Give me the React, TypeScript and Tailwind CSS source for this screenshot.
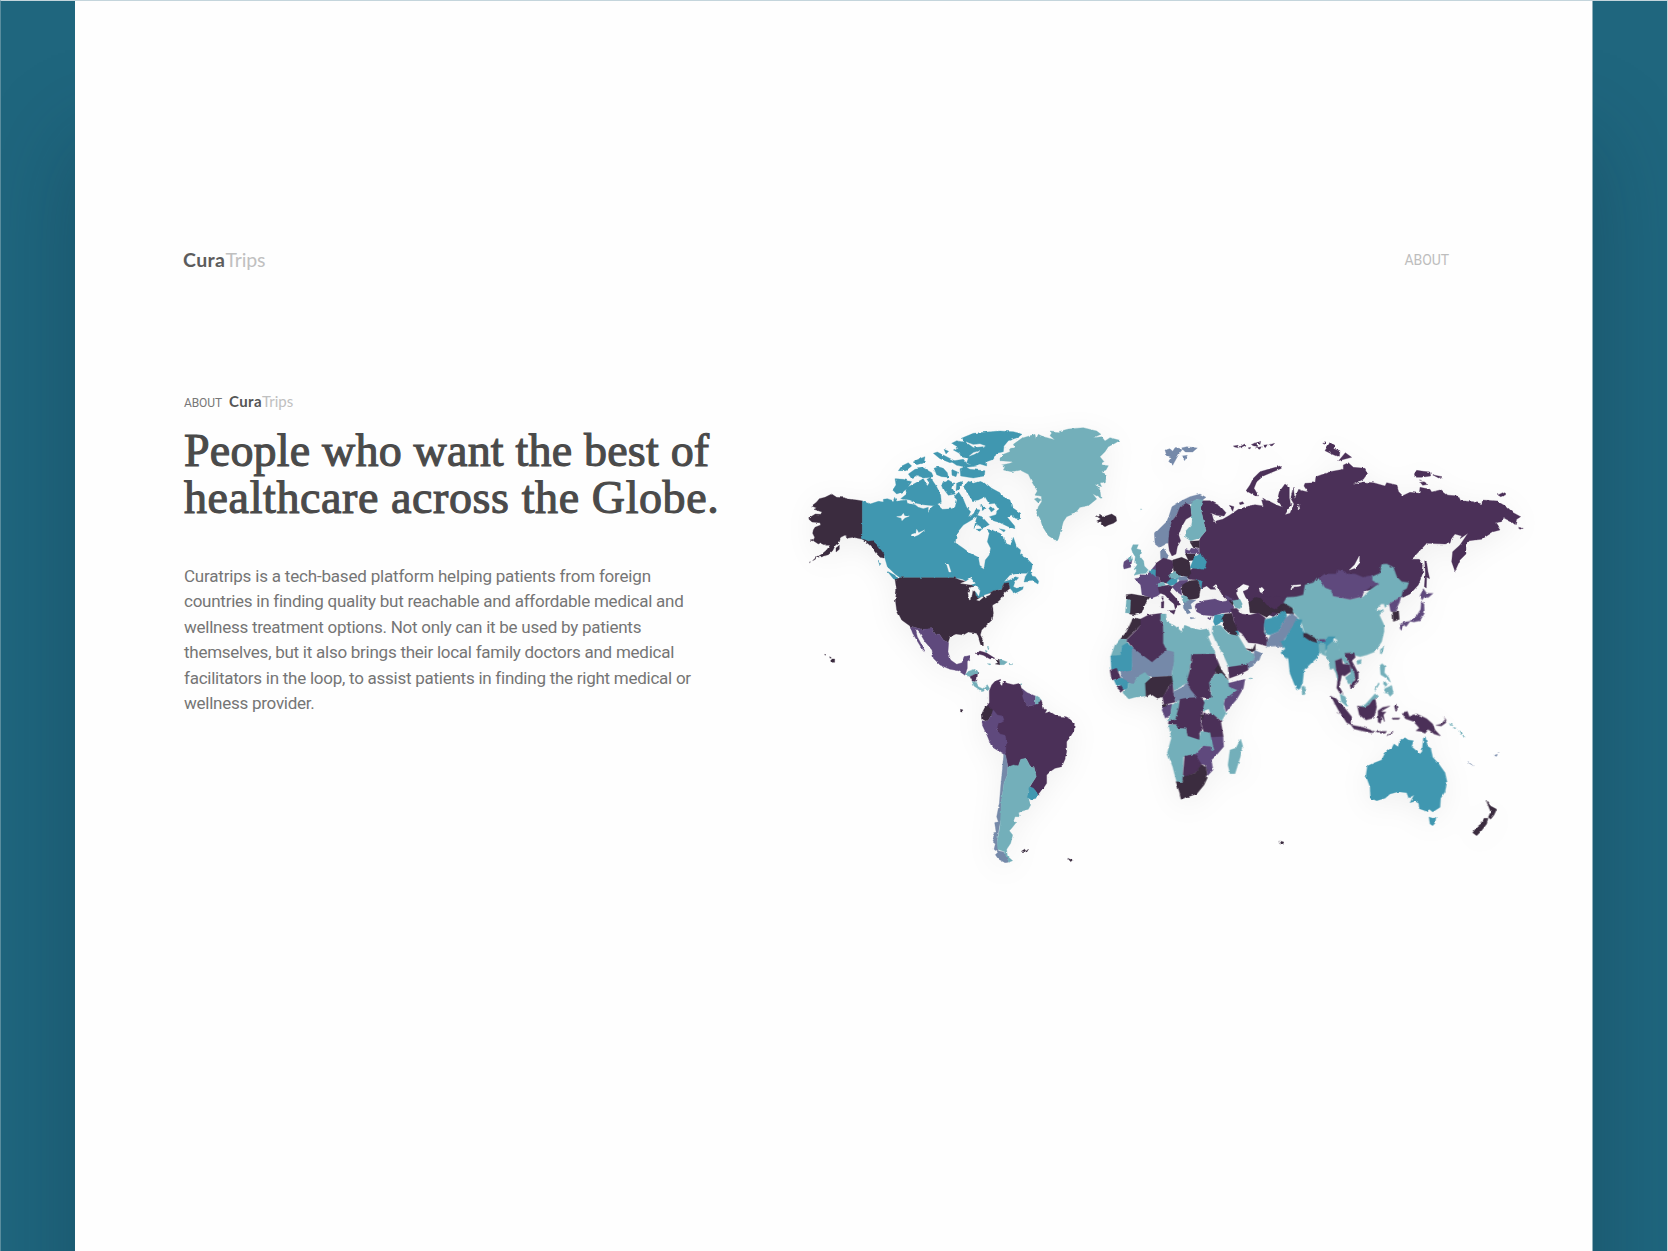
import React from 'react';

const D = '#3b2c3f';
const P = '#4b3058';
const V = '#5f497d';
const S = '#7589a9';
const T = '#4097b0';
const L = '#73afba';
const W = '#f6f6f6';

type Region = { x: number; y: number; shapes: [string, string][] };

const regions: Region[] = [
  {
    // North America
    x: 800,
    y: 420,
    shapes: [
      [D, 'M188 243L170 240 150 238 130 233 110 232 95 222 75 232 58 236 50 246 35 258 50 264 42 268 66 276 62 283 46 282 30 292 26 297 36 306 60 308 62 315 45 322 40 330 38 340 44 352 40 362 55 372 62 368 78 376 90 376 80 390 65 403 50 412 60 411 85 404 98 392 106 376 118 366 122 352 134 346 145 354 160 352 188 358Z'],
      [D, 'M108 384L118 376 118 388 108 396Z M50 410L38 422 46 418Z M28 428L34 425 32 430Z M30 360L40 358 38 363Z'],
      [T, 'M187 243L210 252 235 244 250 246 250 238 262 236 280 242 284 232 290 244 320 240 322 250 345 254 355 262 370 266 385 262 384 275 395 262 410 250 430 268 455 266 465 262 470 244 475 225 490 238 500 262 512 275 505 290 520 282 528 268 540 270 530 290 515 300 490 315 470 340 466 368 490 385 510 400 535 412 540 440 552 448 556 420 568 405 572 385 562 365 568 340 560 328 575 330 600 340 612 350 615 370 632 376 640 352 650 380 662 390 660 402 680 415 697 432 695 448 680 460 655 460 630 465 612 485 630 480 645 470 656 473 645 485 640 500 650 505 670 500 668 508 655 515 640 522 638 514 630 505 625 488 612 490 605 508 580 512 560 525 540 535 528 530 522 500 500 485 488 478 463 473 300 473 285 462 262 440 252 405 230 378 205 364 187 358Z'],
      [T, 'M690 448L676 470 672 486 700 484 714 492 716 484 706 470 696 468Z M262 454L285 466 297 484 280 476Z M234 420L242 430 240 438Z'],
      [T, 'M455 70L470 62 490 66 484 55 520 40 560 36 600 33 640 35 667 42 655 52 625 62 612 78 610 95 590 100 580 118 560 125 560 138 540 132 520 138 500 128 505 115 485 112 478 100 460 90 475 82Z'],
      [W, 'M498 66L520 74 540 72 556 78 540 80 520 82Z M508 108L520 98 540 92 524 102Z'],
      [T, 'M480 146L495 140 510 148 555 152 553 168 520 174 482 168Z M452 124L490 118 502 132 530 138 500 142 470 136Z M400 100L412 96 440 110 466 124 450 128 420 116Z M432 88L446 94 438 102Z M356 118L362 112 366 122Z'],
      [T, 'M325 162L345 148 370 143 395 158 400 170 372 174 350 166 335 176Z M295 152L305 138 325 128 335 138 318 152Z M340 124L375 110 372 128 350 134Z M402 145L415 140 430 145 442 158 445 172 425 170 410 164Z M455 148L473 156 468 170 456 166Z M380 176L392 172 398 180 386 186Z'],
      [T, 'M285 176L310 178 335 185 325 200 310 215 290 222 278 210 288 195Z'],
      [T, 'M302 236L320 222 316 205 345 190 370 176 382 198 395 178 410 200 422 225 424 247 400 257 370 254 350 250 330 240Z'],
      [T, 'M425 190L445 180 462 190 457 205 466 222 445 226 433 210Z M470 188L488 184 480 206 468 212Z M462 230L476 216 490 238 478 246Z'],
      [T, 'M490 200L505 184 520 190 540 184 560 192 575 205 600 218 605 228 630 240 636 262 662 280 662 298 646 295 634 285 622 292 644 318 645 326 625 320 600 308 580 302 568 290 588 284 594 265 584 250 568 252 555 230 535 240 518 242 503 220Z'],
      [T, 'M532 286L546 290 568 314 548 324 530 312 522 326 528 300Z M566 264L576 260 584 268 574 276Z M528 328L546 326 540 334Z M598 326L616 330 612 336Z M540 254L558 262 548 272Z'],
      [W, 'M290 290L304 288 310 280 314 288 328 288 314 294 306 302 304 294Z M334 344L348 338 350 328 356 338 374 330 356 344 342 350Z M438 426L446 434 453 456 447 456Z'],
      [D, 'M187 356L205 364 218 362 232 376 252 402 252 414 240 412 228 400 218 386 208 374 195 364Z'],
      [D, 'M285 478L300 473 463 473 480 480 500 485 522 500 528 528 540 534 560 526 580 512 605 509 612 490 625 488 630 505 612 520 605 535 590 548 578 555 574 575 578 560 580 580 576 600 560 615 545 630 541 645 550 662 550 678 542 674 536 655 530 640 505 636 490 645 468 642 450 650 444 668 430 660 418 642 408 645 396 626 365 628 330 618 305 600 290 570 286 540 290 510Z'],
      [W, 'M482 490L498 484 512 474 526 490 512 494 496 492Z M508 540L504 520 512 502 530 500 540 512 536 528 528 516 518 508 514 536Z M530 540L546 530 550 532 538 542Z M552 526L572 520 570 524 556 530Z'],
      [V, 'M330 618L365 628 396 626 408 645 418 642 430 660 446 668 444 695 452 720 470 733 486 728 492 710 512 706 510 718 502 724 502 745 495 766 475 752 450 748 420 735 400 715 396 690 375 665 360 640 346 626 352 650 368 680 376 695 365 685 350 660 338 640Z'],
      [P, 'M525 700L540 693 560 699 585 715 570 717 550 706 535 702Z'],
      [D, 'M587 718L598 718 600 734 586 732 594 728Z M95 717L104 717 104 727 96 727Z'],
      [L, 'M600 718L622 726 612 734 600 734Z M627 730L638 731 637 734 628 734Z M562 731L573 732 570 735Z M562 680L567 684 565 690Z M556 690L562 694 558 698Z'],
      [D, 'M89 710L94 713 90 715Z M74 703L78 704 75 706Z'],
    ],
  },
  {
    // Greenland and Iceland
    x: 1000,
    y: 415,
    shapes: [
      [L, 'M0 130L10 118 30 110 28 100 45 98 40 88 65 70 90 62 105 58 108 72 115 58 130 65 164 74 150 62 155 54 150 48 175 50 205 42 250 38 290 48 303 58 280 68 305 65 315 78 330 68 360 76 345 85 325 95 315 110 300 125 312 140 305 150 325 152 318 165 305 170 320 180 316 200 300 205 305 215 285 208 300 226 303 250 278 236 290 252 265 272 240 277 225 295 200 305 190 320 183 345 175 373 165 375 145 362 128 335 120 310 110 295 115 275 125 260 124 244 105 240 112 228 98 205 85 178 60 165 35 170 10 165 15 155 5 150 30 145 40 140 0 137Z'],
      [L, 'M103 252L112 248 124 254 114 263Z'],
      [D, 'M288 302L300 307 298 298 315 304 335 297 348 305 350 318 340 325 325 330 315 335 303 328 305 321 290 318 302 312Z'],
    ],
  },
  {
    // Central and South America
    x: 950,
    y: 660,
    shapes: [
      [L, 'M46 44L55 34 75 28 84 38 75 42 60 50Z M66 64L80 68 85 80 98 86 112 74 119 86 112 92 106 84 96 95 84 86 72 78Z'],
      [P, 'M60 50L83 38 80 66 66 62Z'],
      [P, 'M118 92L125 75 135 64 152 58 150 72 156 78 160 64 172 70 190 74 210 70 214 85 222 92 220 108 225 130 240 138 258 132 272 118 282 148 290 150 285 160 300 155 320 168 345 170 360 178 373 190 372 212 358 235 350 245 350 275 345 298 335 320 315 325 300 335 290 345 290 370 280 385 268 402 262 408 256 392 240 380 258 350 252 320 240 318 228 295 212 300 205 318 174 322 166 285 150 250 135 180 105 145 118 128Z'],
      [D, 'M96 160L105 142 115 138 130 152 122 170 108 184 98 178Z M31 148L38 149 38 156 32 156Z'],
      [V, 'M96 182L108 184 125 168 130 150 142 165 158 168 162 180 145 190 140 208 150 222 165 226 169 245 166 286 125 260 112 228 98 198Z'],
      [V, 'M216 86L232 98 256 108 256 134 240 138 226 132 218 110Z'],
      [L, 'M257 107L273 118 264 132 256 132Z M208 70L216 68 214 74Z'],
      [S, 'M161 282L167 286 174 320 172 345 162 370 155 420 155 470 148 500 142 540 145 572 165 577 172 590 178 607 165 608 145 597 136 584 144 577 132 568 136 552 128 545 134 530 128 518 138 515 134 488 145 486 140 470 148 430 152 380 158 320Z'],
      [L, 'M173 322L190 315 205 318 212 298 228 295 240 318 252 320 259 350 240 378 232 400 235 415 242 435 235 448 215 454 206 458 208 470 195 470 190 485 198 488 185 505 178 512 188 525 182 550 170 568 172 588 188 602 178 606 168 592 166 576 143 568 142 545 150 500 155 420 162 370 172 345Z'],
      [T, 'M238 380L250 384 262 400 258 415 242 419 232 412 234 395Z'],
      [D, 'M214 574L225 567 222 576Z M226 575L236 567 230 577Z'],
      [D, 'M353 595L369 601 364 607Z'],
    ],
  },
  {
    // Russia, Kazakhstan and Ukraine
    x: 1230,
    y: 430,
    shapes: [
      [P, 'M-88 212L-60 212 -30 228 -12 248 -18 258 -40 256 -55 250 -50 268 -38 282 -40 272 -22 268 -5 258 10 248 25 238 50 230 75 224 100 228 95 210 115 212 140 225 158 232 142 210 148 185 165 162 178 172 178 200 182 225 165 254 180 250 192 222 182 205 186 190 190 172 194 206 206 178 218 182 234 186 222 168 225 160 255 158 258 140 300 125 340 118 340 105 355 98 370 112 405 115 413 130 400 148 368 164 400 156 430 158 465 168 470 158 500 165 506 185 518 197 540 187 568 190 570 172 600 178 605 186 630 180 650 195 685 198 692 212 730 215 755 222 758 210 800 213 830 230 850 248 872 260 860 268 856 284 845 276 818 262 815 275 796 278 810 300 790 305 755 328 735 330 718 332 708 345 708 372 690 390 675 424 665 395 668 365 690 345 714 310 690 326 695 318 675 312 665 325 660 340 645 342 590 340 545 388 568 388 580 405 578 430 565 465 540 492 520 502 508 500 480 470 300 500 220 502 170 508 188 524 160 538 130 560 40 520 0 520 -20 500 -35 475 -42 462 -52 470 -42 478 -58 478 -70 468 -85 475 -92 462 -98 450 -125 448 -128 430 -112 415 -92 370 -92 332 -88 322 -72 302 -78 280 -88 235Z'],
      [P, 'M75 197L48 182 60 165 70 145 90 125 115 118 150 108 155 115 130 125 100 138 80 155 72 175 86 198Z'],
      [P, 'M10 48L24 46 28 54 14 51Z M30 50L44 42 48 48 36 54Z M64 44L76 38 84 48 72 48Z M82 38L92 34 90 44Z M76 54L94 50 90 58Z M98 46L112 44 106 53Z M116 45L134 40 126 48Z M54 54L62 52 60 57Z'],
      [P, 'M285 62L300 37 318 48 310 56 330 62 328 82 305 72Z M326 92L346 68 365 82Z M278 40L286 38 284 43Z M553 132L560 121 580 124 600 126 602 138 575 142 556 142Z M607 134L636 140 626 144Z M572 158L582 155 594 163 578 166Z M568 150L578 152Z M804 195L818 188 828 194 812 200Z M862 291L880 295 870 298Z M28 218L38 215 42 221 30 224Z M-2 226L12 230 8 244Z M98 204L108 210 104 214Z'],
      [P, 'M584 392L590 398 594 425 599 446 590 442 589 474 583 470 586 430Z'],
      [W, 'M388 378L388 400 376 414 358 420 374 404Z M182 478L188 466 212 464 212 468 192 470 186 480Z M88 476L96 472 103 480 98 490 90 486Z M206 222L209 236 204 240Z M20 478L40 463 57 468 52 478 38 484 46 502 60 520 60 550 42 553 34 532 28 508 20 492Z'],
    ],
  },
  {
    // Europe and the Caucasus
    x: 1100,
    y: 480,
    shapes: [
      [S, 'M165 190L163 162 180 145 200 125 208 105 216 80 245 62 270 50 300 42 318 52 305 62 290 58 275 72 262 72 245 78 232 100 220 120 212 150 205 188 180 202Z'],
      [P, 'M205 190L208 155 215 125 230 105 240 82 258 70 272 76 275 108 258 118 245 140 236 165 242 182 232 200 228 222 216 228 208 212Z'],
      [L, 'M277 120L272 78 278 64 290 58 308 60 302 85 312 130 318 152 300 174 272 182 256 172 258 152 275 134Z'],
      [S, 'M181 215L192 205 196 215 206 228 200 238 182 236Z'],
      [L, 'M94 206L99 194 115 194 110 206 123 210 119 228 131 243 133 258 145 270 137 280 118 282 102 286 110 272 102 268 112 254 104 246 106 230 98 218Z'],
      [V, 'M72 245L85 236 96 240 92 262 72 267 70 258Z'],
      [L, 'M84 236L96 230 98 240 88 243Z'],
      [V, 'M104 296L120 293 120 284 140 285 152 272 172 248 176 290 182 306 176 322 182 340 172 348 155 354 126 344 122 315Z'],
      [T, 'M146 274L158 268 168 270 166 288Z'],
      [P, 'M168 250L190 234 218 242 220 262 212 275 222 298 200 310 182 306 178 292 168 285Z'],
      [D, 'M78 344L95 342 150 352 140 364 132 380 125 398 105 405 88 402 90 360 80 356Z'],
      [L, 'M80 358L92 360 90 400 76 398Z M170 312L190 306 197 316 176 322Z M208 284L222 274 244 285 235 298 213 295Z'],
      [T, 'M200 308L213 296 232 298 230 312 210 317Z'],
      [S, 'M233 292L262 288 263 300 238 302Z'],
      [V, 'M228 310L240 302 264 300 258 316 242 322 246 346 228 334 216 320Z'],
      [D, 'M218 240L245 232 268 242 273 280 265 290 235 285 220 270Z M256 222L285 222 286 240 266 242Z M270 184L298 182 298 204 280 200Z'],
      [V, 'M256 208L268 212 276 202 296 206 296 222 256 220Z'],
      [T, 'M270 264L283 230 303 221 320 245 312 268Z M291 298L306 306 304 324Z'],
      [P, 'M174 322L205 315 218 320 210 335 228 355 242 374 234 376 226 388 222 372 208 360 195 345 178 338Z M206 392L226 390 222 403Z M184 366L192 364 191 384 184 384Z M185 350L190 350 189 362Z'],
      [D, 'M248 314L268 302 292 300 302 325 296 355 265 360 250 345 244 328Z'],
      [L, 'M244 348L252 346 268 360 252 376Z'],
      [S, 'M250 368L270 360 288 360 272 372 276 386 264 388 272 398 262 402 250 384Z M270 412L286 414 272 417Z'],
      [V, 'M288 372L310 362 345 357 365 365 385 362 402 380 398 395 365 400 340 408 310 405 290 395 285 380Z M375 346L400 356 398 364 380 360Z M322 414L338 410 330 420Z'],
      [D, 'M388 360L402 366 398 378Z'],
      [L, 'M398 362L420 358 427 372 420 386 404 382Z'],
      [D, 'M446 366L465 352 482 355 500 372 525 385 545 362 556 372 578 380 576 398 545 402 520 396 500 412 475 400 450 398Z'],
      [P, 'M482 350L520 348 548 352 558 366 540 376 524 388 500 374Z'],
      [T, 'M344 406L374 402 366 425 346 438 340 425Z'],
      [D, 'M365 417L374 402 395 400 402 425 415 442 412 468 395 466 372 446Z'],
    ],
  },
  {
    // Africa and the Middle East
    x: 1100,
    y: 600,
    shapes: [
      [D, 'M62 116L80 95 92 70 100 53 124 58 122 75 110 88 80 118Z'],
      [L, 'M32 170L45 135 60 117 82 118 82 135 65 140 62 168Z'],
      [T, 'M32 168L62 166 66 138 82 128 98 145 97 214 65 220 50 210 34 208Z'],
      [S, 'M96 136L158 184 198 148 224 152 224 185 214 228 156 232 130 222 112 232 100 254 82 248 65 238 62 216 97 212Z'],
      [P, 'M80 120L110 90 122 75 122 57 145 45 185 40 181 62 190 75 192 125 200 150 156 186 95 140Z'],
      [L, 'M182 42L198 42 200 65 225 78 245 95 255 76 278 85 300 90 324 86 330 104 324 110 344 155 345 164 276 164 272 180 264 245 240 262 222 272 214 235 222 186 222 155 200 150 190 130 190 75 182 62Z'],
      [P, 'M275 163L344 162 357 192 345 220 330 245 330 275 338 295 305 292 285 295 268 268 260 248 270 210Z'],
      [D, 'M345 208L356 192 368 215 386 238 366 226 346 222Z'],
      [L, 'M328 248L345 222 365 220 384 238 388 255 412 270 385 294 372 300 372 325 378 340 365 362 335 342 306 332 310 302 335 292Z'],
      [V, 'M385 250L400 246 435 238 430 265 410 298 378 335 372 312 375 298 412 270 388 260Z'],
      [P, 'M30 210L50 205 62 235 35 240Z M50 262L64 254 72 268 64 276Z'],
      [T, 'M42 240L62 234 86 245 82 270 70 268 60 254 50 258Z'],
      [L, 'M68 278L84 262 85 250 100 252 112 230 135 217 150 235 140 255 138 288 105 292 86 297Z'],
      [D, 'M136 250L155 232 215 228 218 245 205 262 190 290 172 295 152 282 138 290Z'],
      [P, 'M188 292L205 264 217 245 220 275 226 306 192 314Z'],
      [S, 'M220 275L250 260 260 246 272 270 290 292 260 298 225 304Z'],
      [V, 'M186 330L192 318 216 312 212 345 196 355Z'],
      [L, 'M215 316L238 300 236 335 226 362 202 362 212 345Z'],
      [P, 'M240 298L260 294 305 292 313 308 305 335 302 365 306 388 298 400 300 422 262 410 258 387 232 386 228 374 205 372 206 364 226 360 236 325Z'],
      [P, 'M308 338L335 340 362 362 370 410 340 416 312 398 304 370Z'],
      [D, 'M302 346L310 344 308 360Z M188 314L200 312 198 320 189 322Z'],
      [L, 'M206 374L230 374 232 385 258 386 262 408 298 420 302 394 330 398 336 440 305 440 285 466 250 470 248 545 230 546 218 500 202 458 214 415Z'],
      [V, 'M332 412L369 410 371 440 345 470 334 480 339 510 322 528 318 496 290 488 283 466 310 438 335 440Z'],
      [L, 'M328 400L334 418 342 450 335 452Z'],
      [P, 'M254 468L285 463 306 496 285 520 262 528 248 540Z'],
      [D, 'M228 545L248 546 250 530 285 520 305 494 318 500 322 534 312 555 290 582 265 590 243 598 238 575Z'],
      [L, 'M422 417L429 440 418 480 405 521 390 521 384 495 390 450 408 444Z'],
      [W, 'M314 332L326 328 330 340 320 346Z'],
      [L, 'M338 78L362 76 385 102 415 108 428 130 440 150 462 162 462 180 440 195 388 204 370 165 345 120 336 98Z'],
      [P, 'M384 202L430 195 445 190 444 210 415 225 388 235Z'],
      [S, 'M443 190L462 180 462 150 485 160 478 180 445 206Z'],
      [D, 'M438 146L458 148 466 132 466 150 456 156Z'],
      [P, 'M392 27L410 25 425 42 450 45 475 38 496 54 492 95 505 120 500 138 470 130 445 128 425 100 415 94 402 65Z'],
      [T, 'M406 96L416 96 417 107Z'],
      [L, 'M446 234L456 235 450 237Z'],
      [D, 'M537 723L548 726 550 733 540 732Z'],
    ],
  },
  {
    // Asia
    x: 1250,
    y: 560,
    shapes: [
      [D, 'M88 146L108 128 116 138 132 150 130 164 108 158Z'],
      [L, 'M202 53L220 70 225 82 245 90 250 108 300 118 340 110 360 90 385 72 366 62 366 50 390 40 395 13 410 12 430 22 440 50 455 65 476 68 470 85 458 92 454 110 440 118 420 130 405 142 402 132 394 132 376 150 402 152 388 165 402 195 402 215 395 245 375 275 350 285 330 290 312 285 300 278 285 282 268 276 262 240 245 230 225 240 205 242 165 222 155 190 150 178 128 155 130 145 101 128 110 112 140 110 160 105 165 75 190 68Z'],
      [V, 'M207 53L225 42 258 42 262 30 285 35 290 42 315 42 340 52 366 46 366 62 387 72 360 82 342 95 335 110 300 118 250 108 245 90 225 82Z'],
      [T, 'M45 178L65 174 90 160 104 152 110 165 108 175 95 195 85 215 60 225 45 222 42 195Z'],
      [S, 'M50 246L62 225 85 215 95 195 108 172 125 160 142 172 132 195 115 222 102 240 100 264 80 258 50 260Z'],
      [T, 'M90 246L104 240 115 220 130 195 140 175 156 180 152 195 162 218 202 242 210 246 225 242 235 230 252 230 248 245 238 265 226 272 208 275 205 290 185 308 162 330 158 365 150 386 140 390 120 340 115 295 105 292 92 278 106 266Z'],
      [D, 'M160 220L170 220 202 238 203 248 180 242 162 230Z'],
      [V, 'M208 238L225 238 226 245 208 245Z'],
      [L, 'M206 252L226 252 226 288 208 278Z M232 258L250 242 264 245 268 272 285 282 292 302 304 320 317 345 310 368 295 372 286 352 302 340 300 315 285 312 275 296 258 300 258 325 266 350 264 370 258 340 250 325 240 328 235 300 226 284Z'],
      [P, 'M256 302L275 295 278 312 300 315 302 335 284 348 275 345 268 380 280 402 270 400 260 384 265 350 258 325Z'],
      [P, 'M284 280L312 278 316 292 305 302 325 340 325 365 302 385 300 375 316 360 314 340 296 306Z'],
      [L, 'M270 402L286 410 294 438 288 438 274 425Z M155 380L162 378 169 392 164 404 157 404Z M320 302L334 298 332 310 322 313Z M391 268L402 260 396 280 391 282Z'],
      [L, 'M390 316L396 311 405 318 403 338 416 352 422 368 408 354 392 344Z M402 362L412 372 408 380 400 372Z M404 386L425 376 430 400 420 409 414 400 402 398Z M374 388L386 368 388 372 376 391Z'],
      [V, 'M418 132L440 118 453 110 448 128 440 144 436 154 422 154Z M510 108L520 86 530 100 549 100 535 112 522 112 516 120Z M514 126L522 132 523 160 510 182 492 186 480 184 468 200 456 188 478 184 500 168 512 148Z M450 194L462 192 456 212 450 206Z'],
      [D, 'M428 156L446 154 448 178 430 184Z'],
      [P, 'M242 407L258 415 285 445 305 470 305 495 290 488 265 450Z M303 495L340 502 375 515 365 519 312 507Z M378 514L410 514 405 520 380 519Z M410 527L430 514 424 523Z M252 430L256 434Z M260 456L266 462Z'],
      [L, 'M328 440L345 434 365 412 375 401 384 410 370 422 360 432 345 444Z'],
      [P, 'M322 438L345 442 358 434 368 420 376 418 380 440 372 474 348 480 328 465Z M384 452L398 442 420 438 400 450 392 456 408 456 400 464 404 486 394 468 392 490 384 486Z M433 438L440 436 442 450 436 450Z M426 474L450 474 446 478 428 478Z'],
      [P, 'M456 458L472 454 478 470 500 462 530 476 548 492 555 510 572 528 552 522 535 508 525 520 512 514 498 512 508 504 490 484 466 476Z M558 496L574 492 586 478 588 488 574 498Z M582 472L590 482Z'],
    ],
  },
  {
    // Oceania
    x: 1330,
    y: 640,
    shapes: [
      [T, 'M108 408L112 378 130 370 155 360 165 340 175 330 185 325 192 312 204 320 210 300 225 293 235 300 250 302 245 320 270 342 276 335 280 295 286 290 292 318 302 325 308 352 325 370 345 398 351 425 345 455 332 475 330 502 308 516 298 508 290 514 268 506 266 490 255 484 240 488 252 465 236 474 230 458 205 455 180 462 165 475 140 482 122 475 120 440Z'],
      [T, 'M297 531L308 535 318 532 315 550 308 557 300 552Z'],
      [D, 'M468 480L482 498 500 508 492 525 482 538 475 532 482 515Z M462 535L474 535 470 552 452 575 440 587 428 578 440 562 455 550Z'],
      [L, 'M358 250L366 256 362 258Z M370 262L378 264 374 267Z M386 272L398 280 392 284Z M398 288L405 291 400 292Z'],
      [S, 'M414 364L432 380 430 381Z M495 345L502 343 500 349 495 348Z M504 338L509 335Z'],
    ],
  },
  {
    // Svalbard and northern isles
    x: 1160,
    y: 440,
    shapes: [
      [S, 'M15 30L30 26 38 34 46 22 68 28 58 40 50 54 38 76 26 64 34 52 20 46Z M64 24L80 20 112 24 98 36 76 36Z M66 48L82 46 74 62Z'],
      [L, 'M-57 206L-54 210 -58 212Z'],
    ],
  },
];

function WorldMap() {
  return (
    <svg className="block h-[450px] w-[740px] drop-shadow-[0_6px_14px_rgba(0,0,0,0.055)]" viewBox="800 420 740 450" role="img" aria-label="World map">
      <defs>
        <filter id="coast" x="0" y="0" width="100%" height="100%" colorInterpolationFilters="sRGB">
          <feTurbulence type="fractalNoise" baseFrequency="0.2" numOctaves="2" seed="4" result="n" />
          <feDisplacementMap in="SourceGraphic" in2="n" scale="2.6" xChannelSelector="R" yChannelSelector="G" />
        </filter>
      </defs>
      <g filter="url(#coast)">
        {regions.map((r) => (
          <g key={`${r.x}-${r.y}`} transform={`translate(${r.x} ${r.y}) scale(0.33333)`}>
            {r.shapes.map(([c, d], i) => (
              <path key={i} d={d} fill={c} stroke={c} strokeWidth="1" strokeLinejoin="round" />
            ))}
          </g>
        ))}
      </g>
    </svg>
  );
}

export default function App() {
  return (
    <div className="flex h-[1251px] w-[1668px] justify-center overflow-hidden border-x border-t border-[#c4d5dc] border-l-[#5a8d9e] bg-[#1f667e]">
      <main className="h-full w-[1518px] border-r border-[#8fb0bb] bg-[#fefefe] pl-[109px] shadow-[0_140px_90px_rgba(12,40,60,0.3)]">
        <header className="mt-[245px] flex h-[28px] items-center justify-between pr-[143px]">
          <div className="-ml-px font-['Lato',sans-serif] text-[19.5px] leading-7 tracking-[-0.1px] text-[#c0c0c0]">
            <b className="tracking-[0.4px] text-[#5c5c5c]">Cura</b>Trips
          </div>
          <nav className="font-['Roboto',sans-serif] text-[14px] leading-7 tracking-[-0.1px] text-[#bdbdbd]">ABOUT</nav>
        </header>
        <div className="flex">
          <section className="w-[616px] pt-[115px]">
            <div className="flex h-6 items-baseline gap-[7px] font-['Roboto',sans-serif] text-[12px] leading-6 tracking-[-0.1px] text-[#777]">
              ABOUT
              <span className="font-['Lato',sans-serif] text-[15px] tracking-normal text-[#c0c0c0]">
                <b className="tracking-[0.4px] text-[#555]">Cura</b>Trips
              </span>
            </div>
            <h1 className="mt-[14px] font-['Liberation_Serif',serif] text-[46px] leading-[47px] font-normal whitespace-nowrap text-[#4a4a4a] [-webkit-text-stroke:1.1px_#4a4a4a]">
              <span className="block tracking-[0.2px]">People who want the best of</span>
              <span className="block tracking-[0.6px]">healthcare across the Globe.</span>
            </h1>
            <p className="mt-[43px] font-['Roboto',sans-serif] text-[17px] leading-[25.4px] tracking-[-0.255px] whitespace-nowrap text-[#757575]">
              <span className="block tracking-[-0.19px]">Curatrips is a tech-based platform helping patients from foreign</span>
              <span className="block">countries in finding quality but reachable and affordable medical and</span>
              <span className="block">wellness treatment options. Not only can it be used by patients</span>
              <span className="block">themselves, but it also brings their local family doctors and medical</span>
              <span className="block">facilitators in the loop, to assist patients in finding the right medical or</span>
              <span className="block">wellness provider.</span>
            </p>
          </section>
          <div className="pt-[146px]">
            <WorldMap />
          </div>
        </div>
      </main>
    </div>
  );
}
